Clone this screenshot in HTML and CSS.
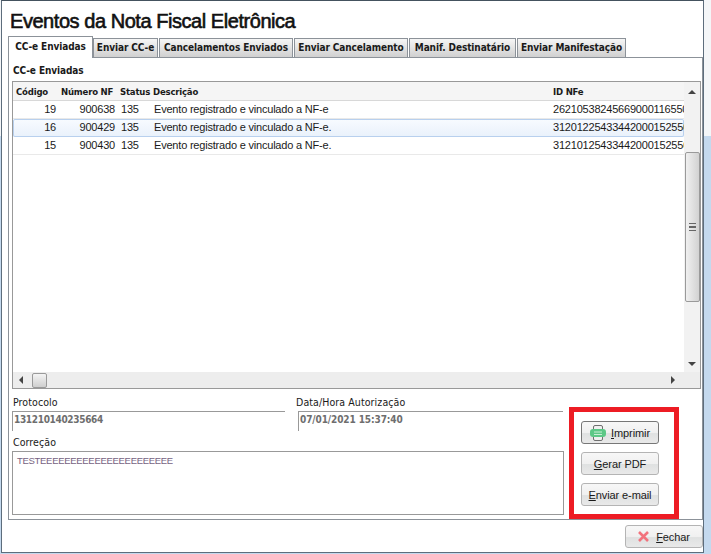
FILE: index.html
```html
<!DOCTYPE html>
<html lang="en">
<head>
  <meta charset="UTF-8" />
  <title>Eventos da Nota Fiscal Eletrônica</title>
  <link rel="stylesheet" href="styles.css">
</head>
<body>
  <div class="window">
    <h1 class="title">Eventos da Nota Fiscal Eletrônica</h1>

    <div class="tabs">
      <div class="tab active">CC-e Enviadas</div>
      <div class="tab w65">Enviar CC-e</div>
      <div class="tab w134">Cancelamentos Enviados</div>
      <div class="tab w114">Enviar Cancelamento</div>
      <div class="tab w107">Manif. Destinatário</div>
      <div class="tab w109">Enviar Manifestação</div>
    </div>

    <div class="panel">
      <div class="group-label">CC-e Enviadas</div>

      <div class="grid">
        <div class="grid-main">
          <div class="grid-view">
            <div class="row head">
              <div class="col-cod">Código</div>
              <div class="col-num">Número NF</div>
              <div class="col-status">Status</div>
              <div class="col-desc">Descrição</div>
              <div class="col-id">ID NFe</div>
            </div>
            <div class="row">
              <div class="col-cod num">19</div>
              <div class="col-num num">900638</div>
              <div class="col-status">135</div>
              <div class="col-desc">Evento registrado e vinculado a NF-e</div>
              <div class="col-id">26210538245669000116550</div>
            </div>
            <div class="row selected">
              <div class="col-cod num">16</div>
              <div class="col-num num">900429</div>
              <div class="col-status">135</div>
              <div class="col-desc">Evento registrado e vinculado a NF-e.</div>
              <div class="col-id">31201225433442000152550</div>
            </div>
            <div class="row">
              <div class="col-cod num">15</div>
              <div class="col-num num">900430</div>
              <div class="col-status">135</div>
              <div class="col-desc">Evento registrado e vinculado a NF-e.</div>
              <div class="col-id">31210125433442000152550</div>
            </div>
          </div>
          <div class="vscroll">
            <div class="arrow-up"></div>
            <div class="vthumb"><span class="grip"></span></div>
            <div class="arrow-down"></div>
          </div>
        </div>
        <div class="hscroll">
          <div class="arrow-left"></div>
          <div class="hthumb"></div>
          <div class="arrow-right"></div>
        </div>
      </div>

      <div class="bottom">
        <div class="fields">
          <div class="field-row">
            <div class="field protocolo">
              <label>Protocolo</label>
              <div class="edit">131210140235664</div>
            </div>
            <div class="field datahora">
              <label>Data/Hora Autorização</label>
              <div class="edit">07/01/2021 15:37:40</div>
            </div>
          </div>
          <label class="memo-label">Correção</label>
          <div class="memo">TESTEEEEEEEEEEEEEEEEEEEEEE</div>
        </div>

        <div class="highlight">
          <button class="btn focused">
            <svg width="16" height="16" viewBox="0 0 16 16">
              <rect x="3.5" y="0.5" width="9" height="15" rx="1.5" fill="#f0f0f0" stroke="#6f6f6f" />
              <rect x="0" y="4" width="16" height="8" rx="3" fill="#5cc886" />
              <path d="M4 7h8M4 9.5h8" stroke="#c9eed6" />
            </svg>
            <span><u>I</u>mprimir</span>
          </button>
          <button class="btn"><span><u>G</u>erar PDF</span></button>
          <button class="btn"><span><u>E</u>nviar e-mail</span></button>
        </div>
      </div>
    </div>

    <div class="footer">
      <button class="btn wide-gap">
        <svg width="11" height="11" viewBox="0 0 11 11">
          <path d="M1 1l9 9M10 1L1 10" stroke="#f2737d" stroke-width="2.6" />
        </svg>
        <span><u>F</u>echar</span>
      </button>
    </div>
  </div>
</body>
</html>
```

FILE: styles.css
```css
html, body {
  margin: 0;
  height: 554px;
  overflow: hidden;
}

body {
  font-family: "Liberation Sans", Arial, sans-serif;
  font-size: 11px;
  letter-spacing: -0.2px;
  color: #1a1a1a;
  background: linear-gradient(to bottom, #f4f6f8 0, #f4f6f8 136px, #c4d9ee 136px, #c4d9ee 100%);
}

.window {
  box-sizing: border-box;
  width: 703px;
  height: 553px;
  margin-left: 1px;
  background-color: #fff;
  border: 1px solid #5d6d7c;
  border-top-color: #44525e;
  padding: 0 0 0 6px;
}

.title {
  margin: 0;
  height: 35px;
  padding-left: 2px;
  font-size: 20px;
  line-height: 41px;
  font-weight: normal;
  letter-spacing: -0.45px;
  -webkit-text-stroke: 0.6px #111;
  color: #111;
}

/* Tabs */
.tabs {
  display: flex;
  align-items: flex-end;
  height: 21px;
  position: relative;
  z-index: 1;
}

.tab {
  box-sizing: border-box;
  height: 19px;
  margin-right: 1px;
  border: 1px solid #8c9299;
  border-bottom: none;
  background: linear-gradient(to bottom, #f6f6f6, #d0d0d0);
  font-family: "DejaVu Sans Condensed", "DejaVu Sans", sans-serif;
  font-size: 10px;
  font-weight: bold;
  letter-spacing: -0.1px;
  line-height: 18px;
  text-align: center;
  white-space: nowrap;
}

.tab.active {
  width: 85px;
  height: 22px;
  margin-right: 0;
  margin-bottom: -1px;
  background: #fff;
  line-height: 19px;
}

.w65 { width: 65px; }
.w134 { width: 134px; }
.w114 { width: 114px; }
.w107 { width: 107px; }
.w109 { width: 109px; }

.panel {
  box-sizing: border-box;
  width: 695px;
  height: 463px;
  border: 1px solid #8c9299;
  padding: 0 1px 0 3px;
}

.group-label {
  height: 23px;
  padding-left: 1px;
  font-family: "DejaVu Sans Condensed", "DejaVu Sans", sans-serif;
  font-size: 10px;
  font-weight: bold;
  letter-spacing: -0.1px;
  line-height: 25px;
}

/* Grid */
.grid {
  box-sizing: border-box;
  height: 308px;
  border: 1px solid #999;
}

.grid-main {
  display: flex;
  height: 290px;
}

.grid-view {
  width: 671px;
  overflow: hidden;
}

.row {
  box-sizing: border-box;
  display: grid;
  grid-template-columns: 45px 59px 35px 400px 132px;
  height: 18px;
  line-height: 17px;
  border-bottom: 1px solid #e9e9e9;
  white-space: nowrap;
  overflow: hidden;
}

.row > div {
  overflow: hidden;
}

.row.head {
  height: 19px;
  background-color: #f5f5f5;
  border-bottom: 1px solid #d8d8d8;
  font-family: "DejaVu Sans Condensed", "DejaVu Sans", sans-serif;
  font-size: 9.5px;
  font-weight: bold;
  letter-spacing: -0.2px;
  line-height: 19px;
}

.row.selected {
  background: linear-gradient(to bottom, #f8fbff, #e9f1fb);
  border-bottom: none;
  border-radius: 2px;
  box-shadow: inset 0 0 0 1px #b8d0ee;
}

.head .col-cod { padding-left: 3px; }
.head .col-num { padding-left: 3px; }
.col-status { padding-left: 4px; }
.head .col-status { padding-left: 3px; }
.col-desc { padding-left: 2px; }
.head .col-desc { padding-left: 1px; }
.col-id { padding-left: 1px; }

.num {
  text-align: right;
  padding-right: 2px;
}

.vscroll {
  flex: 1;
  display: flex;
  flex-direction: column;
  align-items: center;
  background-color: #f2f2f2;
  padding-top: 8px;
}

.arrow-up, .arrow-down {
  width: 0;
  height: 0;
  border-left: 4px solid transparent;
  border-right: 4px solid transparent;
}

.arrow-up {
  border-bottom: 4px solid #444;
}

.arrow-down {
  border-top: 4px solid #444;
  margin-top: 60px;
}

.vthumb {
  box-sizing: border-box;
  display: flex;
  align-items: center;
  justify-content: center;
  width: 15px;
  height: 150px;
  margin-top: 58px;
  border: 1px solid #9a9a9a;
  border-radius: 2px;
  background: linear-gradient(to right, #f0f0f0, #d2d2d2);
}

.grip {
  width: 7px;
  height: 6px;
  border-top: 1px solid #666;
  border-bottom: 1px solid #666;
  background: linear-gradient(to bottom, transparent 2px, #666 2px, #666 4px, transparent 4px);
}

.hscroll {
  display: flex;
  align-items: center;
  height: 16px;
  background-color: #ededed;
  padding-left: 6px;
}

.arrow-left, .arrow-right {
  width: 0;
  height: 0;
  border-top: 4px solid transparent;
  border-bottom: 4px solid transparent;
}

.arrow-left {
  border-right: 4px solid #444;
}

.arrow-right {
  border-left: 4px solid #444;
  margin-left: 624px;
}

.hthumb {
  box-sizing: border-box;
  width: 15px;
  height: 15px;
  margin-left: 9px;
  border: 1px solid #9a9a9a;
  border-radius: 2px;
  background: linear-gradient(to bottom, #f4f4f4, #cfcfcf);
}

/* Fields and buttons */
.bottom {
  display: flex;
}

.fields {
  width: 552px;
}

.field-row {
  display: flex;
  padding-top: 7px;
}

.field label, .memo-label {
  display: block;
  height: 15px;
  padding-left: 1px;
  font-family: "DejaVu Sans Condensed", "DejaVu Sans", sans-serif;
  font-size: 10.5px;
  letter-spacing: 0.1px;
  line-height: 12px;
}

.protocolo {
  width: 273px;
  margin-right: 10px;
}

.datahora {
  width: 268px;
}

.datahora .edit {
  margin-left: 3px;
  letter-spacing: -0.1px;
}

.edit {
  box-sizing: border-box;
  height: 20px;
  border-top: 1px solid #999;
  border-left: 1px solid #999;
  padding-left: 1px;
  font-family: "DejaVu Sans Condensed", "DejaVu Sans", sans-serif;
  font-size: 10px;
  font-weight: bold;
  letter-spacing: -0.33px;
  line-height: 15px;
  color: #6e6e6e;
}

.memo-label {
  margin-top: 5px;
}

.memo {
  box-sizing: border-box;
  height: 64px;
  border: 1px solid #999;
  padding-left: 4px;
  font-size: 9.5px;
  letter-spacing: -0.3px;
  line-height: 17px;
  color: #76627f;
}

.highlight {
  box-sizing: border-box;
  display: flex;
  flex-direction: column;
  align-items: center;
  gap: 8px;
  width: 110px;
  height: 112px;
  margin: 18px 0 0 5px;
  padding: 9px 8px 0 0;
  border: 5px solid #ed1c24;
}

.btn {
  box-sizing: border-box;
  display: flex;
  align-items: center;
  justify-content: center;
  gap: 5px;
  flex-shrink: 0;
  width: 78px;
  height: 23px;
  padding: 0;
  border: 1px solid #b4b4b4;
  border-radius: 3px;
  background: linear-gradient(to bottom, #f7f7f7 0, #f0f0f0 50%, #dfe1e1 55%, #e9e9e9 100%);
  font-family: "Liberation Sans", Arial, sans-serif;
  font-size: 11px;
  letter-spacing: -0.1px;
  color: #1a1a1a;
}

.btn.focused {
  border-color: #777;
}

.btn.wide-gap {
  gap: 7px;
}

.footer {
  display: flex;
  justify-content: flex-end;
  padding: 5px 0 0;
}
```
